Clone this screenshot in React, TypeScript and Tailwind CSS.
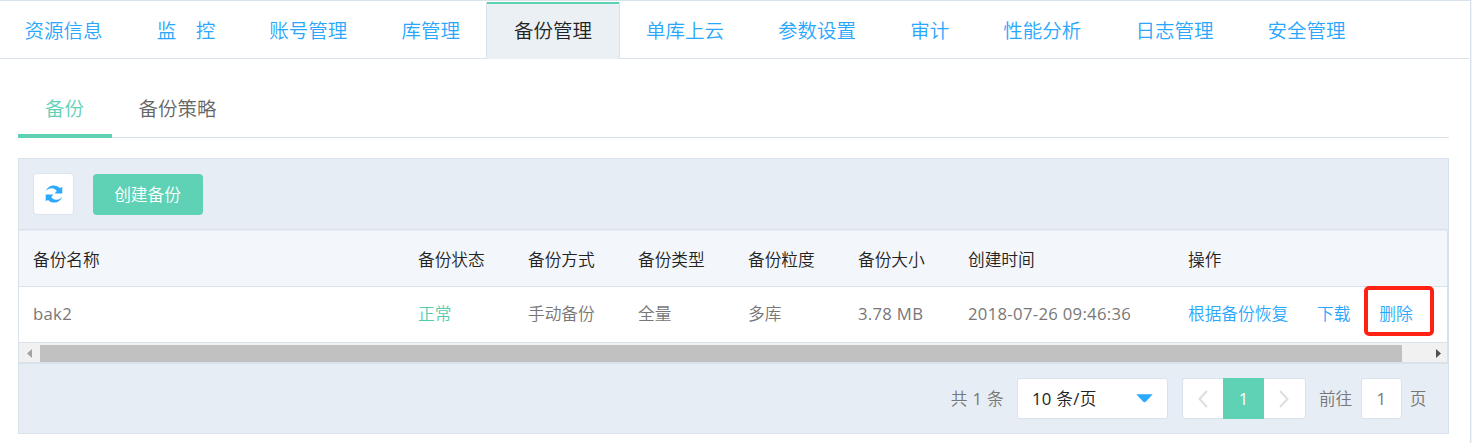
import React from "react";

const tabs = [
  "资源信息",
  "监　控",
  "账号管理",
  "库管理",
  "备份管理",
  "单库上云",
  "参数设置",
  "审计",
  "性能分析",
  "日志管理",
  "安全管理",
];

const headers = ["备份名称", "备份状态", "备份方式", "备份类型", "备份粒度", "备份大小", "创建时间", "操作"];

const columns =
  "grid grid-cols-[385px_110px_110px_110px_110px_110px_220px_1fr] items-center border-r border-[#d9e2eb] pl-[14px]";

function NavTabs() {
  return (
    <nav className="mr-px flex h-[58px] border-b border-[#d9e2eb] text-[19.5px]">
      <div className="-ml-[2.5px] flex h-[58px] pt-px">
        {tabs.map((t) =>
          t === "备份管理" ? (
            <a
              key={t}
              className="-mr-[1.5px] -ml-[0.5px] flex h-[57px] w-[134px] shrink-0 justify-center border-x border-[#d9e2eb] bg-[#ebf0f4] text-[#222]"
            >
              <span className="w-full border-t-2 border-[#5fd1b5] pr-[1px] text-center leading-[54px]">{t}</span>
            </a>
          ) : (
            <a key={t} className="shrink-0 px-[27.05px] leading-[58px] whitespace-pre text-[#2aa7fc]">
              {t}
            </a>
          ),
        )}
      </div>
    </nav>
  );
}

function RefreshIcon() {
  return (
    <svg width="18" height="18" viewBox="0 0 18 18" fill="#2aa9ff">
      <path d="M0.6 6.200C2.200 2.400 5.200 0.400 8.600 0.400c2.600 0 4.700 1 6.200 2.700L17.300 2v6.400H9.600l2.200-2.300C10.800 4.600 9.200 3.500 7 3.300 4.600 3.100 2.400 4.200 0.600 6.200z" />
      <path d="M17.400 11.800C15.800 15.600 12.800 17.600 9.400 17.600c-2.600 0-4.700-1-6.200-2.700L0.700 16V9.600h7.700l-2.200 2.300C7.200 13.400 8.800 14.500 11 14.700c2.400.2 4.600-.9 6.400-2.900z" />
    </svg>
  );
}

function Chevron({ right = false }: { right?: boolean }) {
  return (
    <svg width="10" height="18" viewBox="0 0 10 18" fill="none" stroke="#dedede" strokeWidth="2">
      <path d={right ? "M1 1l7.500 8L1 17" : "M9 1L1.500 9 9 17"} />
    </svg>
  );
}

function Toolbar() {
  return (
    <div className="flex h-[71px] items-start border-b border-[#d9e2eb] pl-[14px]">
      <button className="mt-[14px] flex h-[42px] w-[41px] items-center justify-center rounded-[4px] border border-[#dbe3ec] bg-white">
        <RefreshIcon />
      </button>
      <button className="mt-[15px] ml-[19px] h-[41px] w-[110px] rounded-[4px] bg-[#5fd1b5] pr-[1px] leading-[39px] text-white">
        创建备份
      </button>
    </div>
  );
}

function BackupTable() {
  return (
    <div>
      <div className={`${columns} mt-px h-[56px] border-b bg-[#f3f6fb] text-[#222]`}>
        {headers.map((h) => (
          <span key={h} className="pt-[2px]">{h}</span>
        ))}
      </div>
      <div className={`${columns} h-[56px] border-b bg-white pb-[2px] text-[#777]`}>
        <span className="font-normal tracking-[0.3px]">bak2</span>
        <span className="text-[#4fcdae]">正常</span>
        <span>手动备份</span>
        <span>全量</span>
        <span>多库</span>
        <span className="font-normal tracking-[0.3px]">3.78 MB</span>
        <span className="font-normal tracking-[0.3px]">2018-07-26 09:46:36</span>
        <span className="flex items-center text-[#2aa7fc]">
          <a className="w-[129px] shrink-0">根据备份恢复</a>
          <a className="w-[47px] shrink-0">下载</a>
          <a className="-my-3 flex h-[50px] w-[70px] shrink-0 -translate-y-[3px] items-center justify-center rounded-[5px] border-4 border-[#ff2114]">
            <span className="translate-x-[-3px] translate-y-[3px]">删除</span>
          </a>
        </span>
      </div>
      <div className="flex h-[19px] items-center justify-between border-r border-[#d9e2eb] bg-[#f1f1f1] pr-[6px] pl-[8px]">
        <svg className="mt-[2px]" width="5" height="9" viewBox="0 0 5 9" fill="#a3a3a3">
          <path d="M5 0v9L0 4.500z" />
        </svg>
        <div className="mt-[2px] mr-auto ml-[8px] h-[17px] w-[1362px] bg-[#c1c1c1]" />
        <svg className="mt-[2px]" width="5" height="9" viewBox="0 0 5 9" fill="#505050">
          <path d="M0 0v9l5-4.500z" />
        </svg>
      </div>
    </div>
  );
}

function Pagination() {
  return (
    <div className="flex h-[71px] items-start justify-end border-t-2 border-[#d9e2eb] pt-[14px] pr-[21.5px] leading-[41px] text-[#777]">
      <span className="mr-[13px] tracking-[0.3px]">
        共 <span className="font-normal">1</span> 条
      </span>
      <div className="flex h-[41px] w-[151px] items-center justify-between rounded-[3px] border border-[#d9e2eb] bg-white pr-[14px] pl-[14px] text-[#222]">
        <span className="tracking-[0.3px]">
          <span className="font-normal">10</span> 条<span className="font-normal">/</span>页
        </span>
        <svg width="17" height="9" viewBox="0 0 17 9" fill="#2aa9ff">
          <path d="M0.300 0.300h16.400L10 7.500q-1.500 1.300-3 0z" />
        </svg>
      </div>
      <div className="ml-[14px] flex h-[41px] w-[124px]">
        <span className="flex w-[41px] items-center justify-center rounded-l-[3px] border border-r-0 border-[#d9e2eb] bg-white">
          <Chevron />
        </span>
        <span className="w-[41px] bg-[#5fd1b5] text-center leading-[42px] font-normal text-white">1</span>
        <span className="flex w-[42px] items-center justify-center rounded-r-[3px] border border-l-0 border-[#d9e2eb] bg-white">
          <Chevron right />
        </span>
      </div>
      <span className="ml-[13px]">前往</span>
      <span className="mr-[8px] ml-[8.5px] h-[41px] w-[41px] rounded-[3px] border border-[#d9e2eb] bg-white text-center leading-[39px] font-normal">
        1
      </span>
      <span>页</span>
    </div>
  );
}

export default function App() {
  return (
    <div className="h-[443px] w-[1472px] overflow-hidden bg-[#eef3f7] pr-px font-['Open_Sans','Noto_Sans_CJK_SC',sans-serif] text-[16.7px] font-[350]">
      <div className="h-full border-t border-r border-[#d9e2eb] bg-white">
        <NavTabs />
        <main className="pr-[21px] pl-[18px] pt-[22px]">
          <div className="flex h-[57px] border-b border-[#d9e2eb] text-[19.5px]">
            <a className="h-[57px] w-[94px] border-b-4 border-[#5fd1b5] pr-[1px] text-center leading-[56px] text-[#5fd1b5]">
              备份
            </a>
            <a className="pl-[26.500px] leading-[56px] text-[#666]">备份策略</a>
          </div>
          <section className="mt-[20px] h-[276px] border border-[#d9e2eb] bg-[#e6edf5]">
            <Toolbar />
            <div className="bg-white">
              <BackupTable />
            </div>
            <Pagination />
          </section>
        </main>
      </div>
    </div>
  );
}
